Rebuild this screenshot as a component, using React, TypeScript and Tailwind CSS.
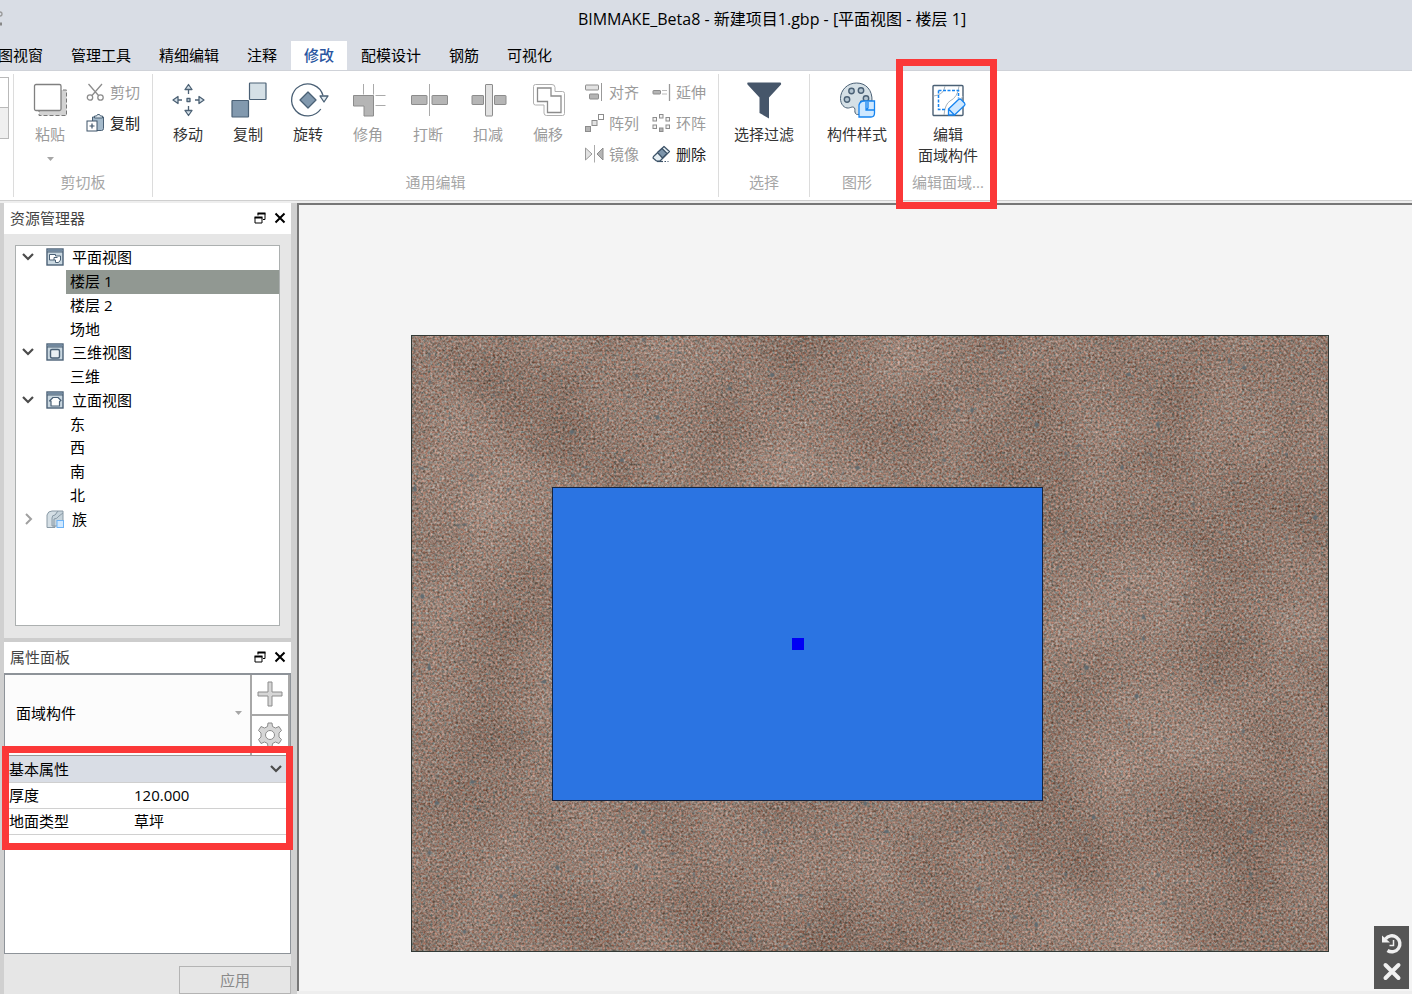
import type { ReactNode } from 'react';
import clsx from 'clsx';

const TABS = ['图视窗', '管理工具', '精细编辑', '注释', '修改', '配模设计', '钢筋', '可视化'];
const ACTIVE_TAB = '修改';

type TreeIconName = 'plan' | 'cube' | 'elevation' | 'family';

interface TreeRow {
  label: string;
  icon?: TreeIconName;
  open?: boolean;
  selected?: boolean;
}

const TREE: TreeRow[] = [
  { label: '平面视图', icon: 'plan', open: true },
  { label: '楼层 1', selected: true },
  { label: '楼层 2' },
  { label: '场地' },
  { label: '三维视图', icon: 'cube', open: true },
  { label: '三维' },
  { label: '立面视图', icon: 'elevation', open: true },
  { label: '东' },
  { label: '西' },
  { label: '南' },
  { label: '北' },
  { label: '族', icon: 'family', open: false },
];

const PROPERTIES = [
  { id: 'thickness', label: '厚度', value: '120.000' },
  { id: 'ground-type', label: '地面类型', value: '草坪' },
];

function BigIcon({ children }: { children: ReactNode }) {
  return (
    <svg width="36" height="36" viewBox="0 0 36 36" fill="none" className="shrink-0 overflow-visible" aria-hidden="true">
      {children}
    </svg>
  );
}

function SmallIcon({ children }: { children: ReactNode }) {
  return (
    <svg width="18" height="18" viewBox="0 0 18 18" fill="none" className="shrink-0 overflow-visible" aria-hidden="true">
      {children}
    </svg>
  );
}

const PasteIcon = (
  <BigIcon>
    <path d="M7 8h27.500v25.500H7z" fill="#d2d2d2" stroke="#777" strokeDasharray="4 2" />
    <rect x="2.500" y="2.500" width="26.500" height="26" rx="1.500" fill="#fff" stroke="#808080" strokeWidth="1.300" />
  </BigIcon>
);

const MoveIcon = (
  <BigIcon>
    <g stroke="#4d6275" fill="#d3dfe8" strokeWidth="1.300" strokeLinejoin="round">
      <path d="M18.500 2.500l3.500 5h-7zM18.500 33.500l3.500-5h-7zM3 18l5-3.500v7zM34 18l-5-3.500v7z" />
      <path d="M18.500 8v4M18.500 28v-4M8 18h4M29 18h-4" />
      <rect x="17" y="16.500" width="3" height="3" />
    </g>
  </BigIcon>
);

const CopyIcon = (
  <BigIcon>
    <g stroke="#4a6075" strokeWidth="1.200">
      <rect x="19.500" y="1" width="16.500" height="16.500" rx="0.500" fill="#d5e0e6" />
      <rect x="2" y="18.500" width="16.500" height="16.500" rx="0.500" fill="#8299ae" />
    </g>
  </BigIcon>
);

const RotateIcon = (
  <BigIcon>
    <g stroke="#4a6075" strokeWidth="1.300" strokeLinejoin="round">
      <path d="M33 13.500A16 16 0 1 0 30.800 27" />
      <path d="M18 10l8 8-8 8-8-8z" fill="#8299ae" />
      <path d="M30 14h8l-4 6z" fill="#e4edf2" />
    </g>
  </BigIcon>
);

const CornerIcon = (
  <BigIcon>
    <path d="M13.500 2v10.500M23.500 2v10.500M25.500 13.500H35.500M25.500 23.500H35.500" stroke="#aaa" />
    <path d="M3.500 13.500h20V34h-9.500V24H3.500z" fill="#b5b5b5" stroke="#8c8c8c" strokeLinejoin="round" />
  </BigIcon>
);

const BreakIcon = (
  <BigIcon>
    <path d="M19.500 2v32" stroke="#aaa" />
    <g fill="#b5b5b5" stroke="#8c8c8c">
      <rect x="1.500" y="13.500" width="15.500" height="9" rx="0.500" />
      <rect x="22" y="13.500" width="15.500" height="9" rx="0.500" />
    </g>
  </BigIcon>
);

const SubtractIcon = (
  <BigIcon>
    <g fill="#b5b5b5" stroke="#8c8c8c">
      <rect x="2" y="13.500" width="11.500" height="9" rx="0.500" />
      <rect x="24.500" y="13.500" width="11.500" height="9" rx="0.500" />
      <rect x="15.500" y="2.500" width="7" height="31.500" rx="0.500" fill="#e2e2e2" />
    </g>
  </BigIcon>
);

const OffsetIcon = (
  <BigIcon>
    <path
      d="M5.500 2.500h16.500q3 0 3 3v4h7.500q2 0 2 2v20q0 2-2 2H16.500q-2.500 0-2.500-2.500v-8H5.500q-2 0-2-2v-16.500q0-2 2-2z"
      stroke="#b0b0b0"
    />
    <path d="M7.500 6h13.500v8h10v16.500H17.500V19.500h-10z" stroke="#8c8c8c" strokeWidth="1.300" />
  </BigIcon>
);

const FilterIcon = (
  <BigIcon>
    <path d="M2 .5h32q1.500 0 1 2L23 15.500V36.500L13.500 31V15.500L1.500 2.500q-.7-2 .5-2z" fill="#46566a" />
  </BigIcon>
);

const PaletteIcon = (
  <BigIcon>
    <path
      d="M17.500 1C8.500 1 1.500 8 1.500 16.500c0 6 4 10 8 9.500 2.500-.4 4.500-2 6 0 1 1.500-.3 3.500 1 5.500 1 1.500 3 1 5 .5V19h11.500C33.500 8 27 1 17.500 1z"
      fill="#d5e0e6"
      stroke="#4a6075"
    />
    <g fill="#b4c5d1" stroke="#4a6075" strokeWidth="1.400">
      <circle cx="12.500" cy="9" r="2.700" />
      <circle cx="22" cy="8.500" r="2.700" />
      <circle cx="8" cy="17.500" r="2.700" />
      <circle cx="27" cy="16.500" r="2.700" />
    </g>
    <path d="M20 23q1-4 5-4h10.500v12q0 4-3.500 4H20z" fill="#cfe8ff" stroke="#1684f0" strokeWidth="1.300" />
    <path d="M27 20v8h8.500M27 28l2-2V20" stroke="#1684f0" strokeWidth="1.300" />
  </BigIcon>
);

const EditRegionIcon = (
  <BigIcon>
    <rect x="3" y="3.500" width="30" height="30" rx="1" fill="#fff" stroke="#4a6075" strokeWidth="1.400" />
    <path d="M3.500 14Q14 13 15 4M29 4q-1 11-9 15-5 3-6 14M33 14q-3 6-8 8" stroke="#a7b3bc" />
    <path d="M8.500 8.500h20v8M8.500 8.500v19h8" stroke="#1684f0" strokeWidth="1.500" strokeDasharray="3 1.500" />
    <path
      d="M18.500 33v-6l10-9.500q1.500-1 2.500 0l3.500 3.500q1 1.500 0 2.500L24.500 33zM18.500 27l6 6"
      fill="#cfe8ff"
      stroke="#1684f0"
      strokeWidth="1.300"
      strokeLinejoin="round"
    />
  </BigIcon>
);

const CutIcon = (
  <SmallIcon>
    <g stroke="#8c8c8c" strokeWidth="1.300">
      <path d="M2.500 1L12.500 12.500M16 1L6 12.500" />
      <circle cx="4" cy="14.500" r="2.700" />
      <circle cx="14.500" cy="14.500" r="2.700" />
    </g>
  </SmallIcon>
);

const ClipboardIcon = (
  <SmallIcon>
    <path d="M6.500 3h11v11.500q0 2-2 2h-9z" fill="#a5bacb" stroke="#4a6075" />
    <path d="M8.500 4V2h2l1-1.500h2l1 1.500h2v2z" fill="#dce6ed" stroke="#4a6075" />
    <rect x="1" y="7" width="10" height="10" fill="#fff" stroke="#3d5368" />
    <path d="M3.500 12h5M6 9.500v5" stroke="#3d5368" strokeWidth="1.200" />
  </SmallIcon>
);

const AlignIcon = (
  <SmallIcon>
    <rect x="0.500" y="2" width="13" height="5" rx="0.500" fill="#e2e2e2" stroke="#8c8c8c" />
    <rect x="4.500" y="11" width="9" height="5" rx="0.500" fill="#b5b5b5" stroke="#8c8c8c" />
    <path d="M16.500 0v18" stroke="#999" />
  </SmallIcon>
);

const ExtendIcon = (
  <SmallIcon>
    <rect x="1" y="7.500" width="7.500" height="3.500" rx="0.500" fill="#b5b5b5" stroke="#8c8c8c" />
    <path d="M10 7.500h5M10 11h5" stroke="#bbb" />
    <path d="M17.500 1v17" stroke="#999" strokeWidth="1.300" />
  </SmallIcon>
);

const ArrayIcon = (
  <SmallIcon>
    <g stroke="#8c8c8c">
      <rect x="0.500" y="12.500" width="5" height="5" fill="#b5b5b5" />
      <rect x="7" y="6.500" width="5" height="5" fill="#e2e2e2" />
      <rect x="13.500" y="0.500" width="5" height="5" fill="#fff" />
    </g>
  </SmallIcon>
);

const RingArrayIcon = (
  <SmallIcon>
    <g stroke="#8c8c8c" fill="#f2f2f2">
      <rect x="7.500" y="0.500" width="3.500" height="3.500" />
      <rect x="1" y="3.500" width="3.500" height="3.500" />
      <rect x="14" y="3.500" width="3.500" height="3.500" />
      <rect x="1" y="11" width="3.500" height="3.500" />
      <rect x="14" y="11" width="3.500" height="3.500" />
      <rect x="7.500" y="14" width="3.500" height="3.500" fill="#b5b5b5" />
    </g>
  </SmallIcon>
);

const MirrorIcon = (
  <SmallIcon>
    <path d="M.5 3l6.500 6-6.500 6z" fill="#e2e2e2" stroke="#999" />
    <path d="M9.500 0v17.500" stroke="#aaa" />
    <path d="M18 3l-6 6 6 6z" fill="#b5b5b5" stroke="#8c8c8c" />
  </SmallIcon>
);

const EraserIcon = (
  <SmallIcon>
    <g stroke="#3d5368" strokeWidth="1.200" strokeLinejoin="round">
      <path d="M1.500 11.500L12 1.500l5.500 5L8 16H4.500L1 13z" fill="#e4edf2" />
      <path d="M5.500 7.500L10 3.500l5 5L10.500 13z" fill="#7d95ab" />
      <path d="M5 16.500h6" />
      <path d="M12.500 16.500h4" strokeDasharray="1.500 1.500" />
    </g>
  </SmallIcon>
);

function TreeIcon({ name }: { name: TreeIconName }) {
  if (name === 'family') {
    return (
      <SmallIcon>
        <path d="M1 5q1-4 5-4h6L9 6v11.500H1z" fill="#d5dfe5" stroke="#8a9aa6" />
        <path d="M6 8q0-3 3-3l3-4h5v15H6z" fill="#c6d3db" stroke="#8a9aa6" />
        <path d="M8 17V9q3 0 5-3l4-3" stroke="#8a9aa6" />
        <rect x="11" y="10.500" width="6.500" height="7" fill="#cfe8ff" stroke="#6cb2f5" />
      </SmallIcon>
    );
  }
  return (
    <SmallIcon>
      <rect x="1" y="1" width="16" height="16" fill="#c9d7e0" stroke="#4a6075" strokeWidth="1.400" />
      <path d="M1.500 1.500h15v2h-15z" fill="#7189a0" />
      <path d="M1 4h16" stroke="#4a6075" />
      {name === 'plan' && (
        <path d="M3.500 6.500h6v1.500h5v4l-2 2.500h-3V12h-6zM8 12V9.500h3.500" fill="#fff" stroke="#4a6075" />
      )}
      {name === 'cube' && (
        <rect x="4.500" y="6.500" width="9" height="8.500" rx="1.500" fill="#e9f0f4" stroke="#4a6075" strokeWidth="1.400" />
      )}
      {name === 'elevation' && (
        <path
          d="M3.500 10L7 6.500h5l3 3-1.500 1v4.500h-8.500v-5z"
          fill="#fff"
          stroke="#4a6075"
          strokeWidth="1.200"
          strokeLinejoin="round"
        />
      )}
    </SmallIcon>
  );
}

function Chevron({ open }: { open: boolean }) {
  return (
    <svg width="14" height="14" viewBox="0 0 14 14" fill="none" aria-hidden="true">
      {open ? (
        <path d="M2 4l5 5 5-5" stroke="#4b4b4b" strokeWidth="2.200" />
      ) : (
        <path d="M5 2l5 5-5 5" stroke="#a0a0a0" strokeWidth="2" />
      )}
    </svg>
  );
}

function Caret() {
  return (
    <svg width="7" height="4" viewBox="0 0 7 4" className="pointer-events-none" aria-hidden="true">
      <path d="M0 0h7L3.500 4z" fill="#a6a6a6" />
    </svg>
  );
}

interface ToolProps {
  icon: ReactNode;
  label: ReactNode;
  disabled?: boolean;
}

function BigTool({ icon, label, disabled }: ToolProps) {
  return (
    <button
      type="button"
      disabled={disabled}
      className={clsx(
        'flex min-w-[60px] flex-col items-center gap-[6px] leading-[21px] whitespace-nowrap',
        disabled ? 'text-[#9b9b9b]' : 'text-[#333]',
      )}
    >
      {icon}
      <span>{label}</span>
    </button>
  );
}

function SmallTool({ icon, label, disabled }: ToolProps) {
  return (
    <button
      type="button"
      disabled={disabled}
      className={clsx(
        'flex h-[31px] items-center gap-[6px] whitespace-nowrap',
        disabled ? 'text-[#9b9b9b]' : 'text-[#222]',
      )}
    >
      {icon}
      {label}
    </button>
  );
}

function RibbonGroup({ title, className, children }: { title: string; className?: string; children: ReactNode }) {
  return (
    <section aria-label={title} className={clsx('relative flex h-[123px] flex-col justify-between', className)}>
      <div className="flex justify-center">{children}</div>
      <p className="pb-[4px] text-center leading-[21px] whitespace-nowrap text-[#a6a6a6]">{title}</p>
    </section>
  );
}

function DockTitle({ title }: { title: string }) {
  return (
    <div className="flex h-[31px] shrink-0 items-center bg-white pr-[5px] pb-[2px] pl-[6px] text-[#444]">
      <h2 className="flex-1">{title}</h2>
      <button type="button" aria-label="浮动" className="mr-[8px]">
        <svg width="12" height="12" viewBox="0 0 12 12" fill="none" aria-hidden="true">
          <path d="M4 3.500V1.500h7v6H9" stroke="#000" />
          <path d="M3.500 1.500h8" stroke="#000" strokeWidth="2" />
          <path d="M1 5.500h7v5.500H1z" stroke="#000" />
          <path d="M.5 5.500h8" stroke="#000" strokeWidth="2" />
        </svg>
      </button>
      <button type="button" aria-label="关闭">
        <svg width="12" height="12" viewBox="0 0 12 12" fill="none" aria-hidden="true">
          <path d="M1.500 1.500l9 9M10.500 1.500l-9 9" stroke="#000" strokeWidth="2" />
        </svg>
      </button>
    </div>
  );
}

function Header() {
  return (
    <header className="h-[71px] overflow-hidden border-b border-[#cfd2d8] bg-[#d9dde5]">
      <div className="flex h-[38px] items-center">
        <svg width="4" height="16" viewBox="0 0 4 16" fill="none" className="shrink-0" aria-hidden="true">
          <circle cx="0" cy="3" r="2" stroke="#999" strokeWidth="1.300" />
          <path d="M0 13h2" stroke="#888" strokeWidth="3" />
        </svg>
        <h1 className="flex-1 pl-[128px] text-center text-base leading-[22px] text-black">
          BIMMAKE_Beta8 - 新建项目1.gbp - [平面视图 - 楼层 1]
        </h1>
      </div>
      <nav className="-ml-[16px] flex pt-[3px]">
        {TABS.map((tab) => (
          <button
            key={tab}
            type="button"
            className={clsx(
              'h-[30px] shrink-0 pb-[2px] whitespace-nowrap',
              tab === ACTIVE_TAB ? 'bg-white px-[13px] font-medium text-[#2a56a0]' : 'px-[14px] text-black',
            )}
          >
            {tab}
          </button>
        ))}
      </nav>
    </header>
  );
}

function Ribbon() {
  return (
    <div className="flex h-[130px] border-b border-[#cfcfcf] bg-white pt-[3px]">
      <div className="mr-[4px] w-[9px] shrink-0 pt-[3px]">
        <div className="h-[31px] border border-l-0 border-[#b9b9b9] bg-white" />
        <div className="h-[31px] border border-t-0 border-l-0 border-[#b9b9b9] bg-[#efefef]" />
      </div>
      <RibbonGroup title="剪切板" className="w-[140px] shrink-0 border-x border-[#dcdcdc]">
        <div className="flex w-[126px]">
          <div className="flex flex-col items-center pt-[8px]">
            <BigTool icon={PasteIcon} label="粘贴" disabled />
            <div className="pt-[12px]">
              <Caret />
            </div>
          </div>
          <div className="ml-[6px] pt-[2px]">
            <SmallTool icon={CutIcon} label="剪切" disabled />
            <SmallTool icon={ClipboardIcon} label="复制" />
          </div>
        </div>
      </RibbonGroup>
      <RibbonGroup title="通用编辑" className="w-[566px] shrink-0 border-r border-[#dcdcdc]">
        <div className="flex pt-[8px]">
          <BigTool icon={MoveIcon} label="移动" />
          <BigTool icon={CopyIcon} label="复制" />
          <BigTool icon={RotateIcon} label="旋转" />
          <BigTool icon={CornerIcon} label="修角" disabled />
          <BigTool icon={BreakIcon} label="打断" disabled />
          <BigTool icon={SubtractIcon} label="扣减" disabled />
          <BigTool icon={OffsetIcon} label="偏移" disabled />
        </div>
        <div className="mr-[7px] ml-[7px] grid grid-cols-2 gap-x-[13px] pt-[2px]">
          <SmallTool icon={AlignIcon} label="对齐" disabled />
          <SmallTool icon={ExtendIcon} label="延伸" disabled />
          <SmallTool icon={ArrayIcon} label="阵列" disabled />
          <SmallTool icon={RingArrayIcon} label="环阵" disabled />
          <SmallTool icon={MirrorIcon} label="镜像" disabled />
          <SmallTool icon={EraserIcon} label="删除" />
        </div>
      </RibbonGroup>
      <RibbonGroup title="选择" className="w-[91px] shrink-0 border-r border-[#dcdcdc]">
        <div className="pt-[8px]">
          <BigTool icon={FilterIcon} label="选择过滤" />
        </div>
      </RibbonGroup>
      <RibbonGroup title="图形" className="w-[94px] shrink-0">
        <div className="pt-[8px]">
          <BigTool icon={PaletteIcon} label="构件样式" />
        </div>
      </RibbonGroup>
      <RibbonGroup title="编辑面域..." className="w-[88px] shrink-0">
        <div className="pt-[8px]">
          <BigTool
            icon={EditRegionIcon}
            label={
              <>
                编辑
                <br />
                面域构件
              </>
            }
          />
        </div>
        <div className="pointer-events-none absolute -top-[15px] -left-[8px] z-10 h-[150px] w-[101px] border-[7px] border-[#fb3838]" />
      </RibbonGroup>
    </div>
  );
}

function Explorer() {
  return (
    <section aria-label="资源管理器" className="bg-[#e6e6e6]">
      <DockTitle title="资源管理器" />
      <div className="px-[11px] pt-[11px] pb-[12px]">
        <div className="h-[381px] border border-[#acb0b0] bg-white">
          <ul role="tree" className="grid h-[285px] auto-rows-fr">
            {TREE.map((row) =>
              row.icon ? (
                <li
                  key={row.label}
                  role="treeitem"
                  aria-expanded={row.open}
                  className="flex items-center pb-[1px] pl-[5px] text-black"
                >
                  <Chevron open={!!row.open} />
                  <span className="mr-[8px] ml-[11px]">
                    <TreeIcon name={row.icon} />
                  </span>
                  {row.label}
                </li>
              ) : (
                <li
                  key={row.label}
                  role="treeitem"
                  aria-selected={!!row.selected}
                  className={clsx(
                    'ml-[50px] flex items-center pb-[1px] pl-[4px] text-black',
                    row.selected && 'bg-[#919892]',
                  )}
                >
                  {row.label}
                </li>
              ),
            )}
          </ul>
        </div>
      </div>
    </section>
  );
}

function Properties() {
  return (
    <section aria-label="属性面板" className="flex flex-1 flex-col border-t-4 border-[#cdcdcd] bg-[#e6e6e6]">
      <DockTitle title="属性面板" />
      <div className="flex flex-1 flex-col border border-t-2 border-[#8e9399] bg-white">
        <div className="flex h-[81px] border-b border-[#999]">
          <div className="relative flex flex-1 items-center bg-[#fcfcfc]">
            <select aria-label="构件类型" className="h-full w-full appearance-none pb-[4px] pl-[11px] text-black">
              <option>面域构件</option>
            </select>
            <span className="pointer-events-none absolute right-[8px] pb-[4px]">
              <Caret />
            </span>
          </div>
          <div className="flex w-[40px] flex-col border-x-2 border-[#a8a8a8]">
            <button
              type="button"
              aria-label="新增"
              className="flex h-[41px] items-center justify-center border-b-2 border-[#a8a8a8]"
            >
              <svg width="26" height="26" viewBox="0 0 26 26" aria-hidden="true">
                <path d="M11 1h4v10h10v4H15v10h-4V15H1v-4h10z" fill="#d6d6d6" stroke="#8c8c8c" />
              </svg>
            </button>
            <button type="button" aria-label="设置" className="flex h-[40px] items-center justify-center">
              <svg width="26" height="26" viewBox="0 0 26 26" aria-hidden="true">
                <path
                  d="M11 1h4l.5 3.500 3 1.500 3.500-1.500 2.500 4L22 11v4l2.500 2.500-2.500 4-3.500-1.500-3 1.500L15 25h-4l-.5-3.500-3-1.500L4 21.500l-2.500-4L4 15v-4L1.500 8.500l2.500-4L7.500 6l3-1.500z"
                  fill="#d6d6d6"
                  stroke="#8c8c8c"
                  strokeLinejoin="round"
                />
                <circle cx="13" cy="13" r="4.500" fill="#fff" stroke="#8c8c8c" />
              </svg>
            </button>
          </div>
        </div>
        <div className="relative">
          <table className="w-full table-fixed border-collapse text-black">
            <colgroup>
              <col className="w-[129px]" />
              <col />
            </colgroup>
            <thead>
              <tr className="h-[26px] border-b border-[#cfcfcf] bg-[#d9dde5]">
                <th colSpan={2} className="p-0 font-normal">
                  <button type="button" className="flex w-full items-center justify-between pr-[7px] pl-[4px]">
                    基本属性
                    <Chevron open />
                  </button>
                </th>
              </tr>
            </thead>
            <tbody>
              {PROPERTIES.map((prop) => (
                <tr key={prop.id} className="h-[26px] border-b border-[#d0d0d0]">
                  <th scope="row" className="p-0 pl-[4px] text-left font-normal">
                    <label htmlFor={prop.id}>{prop.label}</label>
                  </th>
                  <td className="p-0">
                    <input id={prop.id} defaultValue={prop.value} className="block w-full" />
                  </td>
                </tr>
              ))}
            </tbody>
          </table>
          <div className="pointer-events-none absolute -top-[10px] -left-[3px] z-10 h-[104px] w-[291px] border-[7px] border-[#fb3838]" />
        </div>
      </div>
      <div className="flex shrink-0 justify-end pt-[12px]">
        <button type="button" disabled className="h-[28px] w-[112px] border border-[#b4b4b4] text-[#8a8a8a]">
          应用
        </button>
      </div>
    </section>
  );
}

// Fine grain, a slow brightness drift, and sparse blue-grey pebbles on top.
function GravelFill() {
  return (
    <svg width="100%" height="100%" className="block" aria-hidden="true">
      <filter id="gravel" x="0" y="0" width="100%" height="100%" colorInterpolationFilters="sRGB">
        <feTurbulence type="fractalNoise" baseFrequency="0.43" numOctaves="2" seed="7" result="fine" />
        <feColorMatrix
          in="fine"
          values="0.5 0.35 0 0 0.145
                  0.5 0.05 0.2 0 0.11
                  0.5 0 0.28 0 0.05
                  0 0 0 0 1"
          result="grain"
        />
        <feTurbulence type="fractalNoise" baseFrequency="0.009" numOctaves="3" seed="3" result="slow" />
        <feColorMatrix
          in="slow"
          values="1 0 0 0 0
                  1 0 0 0 0
                  1 0 0 0 0
                  0 0 0 0 1"
          result="drift"
        />
        <feComposite in="grain" in2="drift" operator="arithmetic" k1="0" k2="1" k3="0.16" k4="-0.08" result="shade" />
        <feColorMatrix
          in="shade"
          values="1 0 0 0 0
                  0 1 0 0 0
                  0 0 1 0 0
                  0 0 0 0 1"
          result="base"
        />
        <feTurbulence type="fractalNoise" baseFrequency="0.14" numOctaves="1" seed="21" result="coarse" />
        <feColorMatrix
          in="coarse"
          values="0 0 0 0 0.38
                  0 0 0 0 0.42
                  0 0 0 0 0.44
                  9 0 0 0 -6.3"
          result="pebbles"
        />
        <feMerge>
          <feMergeNode in="base" />
          <feMergeNode in="pebbles" />
        </feMerge>
      </filter>
      <rect width="100%" height="100%" filter="url(#gravel)" />
    </svg>
  );
}

function Canvas() {
  return (
    <main className="relative min-w-0 flex-1 overflow-hidden border-t-2 border-l-2 border-[#777] bg-[#f4f4f4]">
      <div className="absolute top-[130px] left-[112px] h-[617px] w-[918px] border border-[#333a36]">
        <GravelFill />
        <div className="absolute top-[151px] left-[140px] flex h-[314px] w-[491px] items-center justify-center border border-[#14233f] bg-[#2b74e2]">
          <div className="size-[12px] bg-[#0000f5]" />
        </div>
      </div>
      <div className="absolute right-[3px] bottom-[2px] flex w-[35px] flex-col items-center gap-[6px] bg-[#555] py-[6px]">
        <button type="button" aria-label="恢复">
          <svg width="22" height="23" viewBox="0 0 22 23" fill="none" className="block" aria-hidden="true">
            <path d="M4.500 7A8 8 0 1 1 6.500 18.500" stroke="#f0f0f0" strokeWidth="3.400" />
            <path d="M1 3.500v7h8z" fill="#f0f0f0" />
            <path d="M12.500 8v5.500H8.500" stroke="#f0f0f0" strokeWidth="1.500" />
          </svg>
        </button>
        <button type="button" aria-label="关闭工具">
          <svg width="22" height="22" viewBox="0 0 22 22" fill="none" className="block" aria-hidden="true">
            <path d="M4.500 4l13 13M17.500 4L4.500 17" stroke="#f0f0f0" strokeWidth="4" strokeLinecap="round" />
          </svg>
        </button>
      </div>
    </main>
  );
}

export default function App() {
  return (
    <div className="flex min-h-screen flex-col overflow-hidden bg-[#eeeeee] font-['Open_Sans','Noto_Sans_CJK_SC',sans-serif] text-[15px] leading-[22px]">
      <Header />
      <Ribbon />
      <div className="flex flex-1 pt-[2px]">
        <aside className="flex w-[297px] shrink-0 flex-col border-r-[6px] border-l-4 border-[#d0d0d0]">
          <Explorer />
          <Properties />
        </aside>
        <div className="flex min-w-0 flex-1 flex-col pb-[3px]">
          <Canvas />
        </div>
      </div>
    </div>
  );
}
